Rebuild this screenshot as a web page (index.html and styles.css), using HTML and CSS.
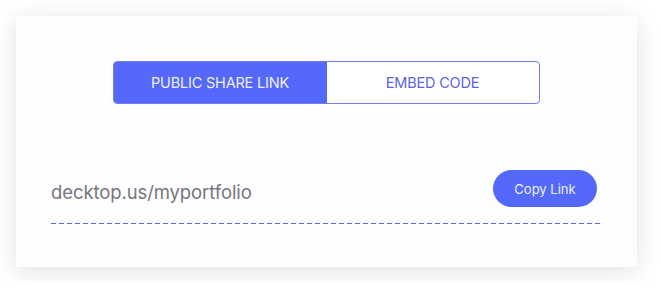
FILE: index.html
```html
<!DOCTYPE html>
<html>
<head>
<meta charset="utf-8">
<link rel="stylesheet" href="styles.css">
</head>
<body>
<div class="card">
  <div class="tabs">
    <div class="tab tab-active">PUBLIC SHARE LINK</div>
    <div class="tab">EMBED CODE</div>
  </div>
  <div class="link-row">
    <span class="url">decktop.us/myportfolio</span>
    <button class="copy">Copy Link</button>
  </div>
  <div class="dashed"></div>
</div>
</body>
</html>
```
FILE: styles.css
```css
html, body {
  margin: 0;
  padding: 0;
  background: #ffffff;
}
body {
  padding: 16px;
  font-family: "Inter", "Liberation Sans", sans-serif;
}
.card {
  width: 621px;
  height: 251px;
  box-sizing: border-box;
  background: #fdfdff;
  box-shadow: 0 4px 22px rgba(0, 0, 0, 0.12);
  padding: 45px 36px 0 35px;
}
.tabs {
  display: flex;
  width: 427px;
  height: 43px;
  margin: 0 auto;
  box-sizing: border-box;
  border: 1px solid #737cf0;
  border-radius: 4px;
  overflow: hidden;
  background: #ffffff;
}
.tab {
  flex: 1;
  display: flex;
  align-items: center;
  justify-content: center;
  font-size: 14.5px;
  color: #5a63e0;
  letter-spacing: -0.2px;
}
.tab-active {
  flex: 0 0 213px;
  background: #5468fa;
  color: #eef0ff;
}
.link-row {
  display: flex;
  align-items: center;
  justify-content: space-between;
  margin-top: 66px;
  padding-right: 4px;
  height: 37px;
}
.url {
  font-size: 18.5px;
  color: #77767c;
  letter-spacing: -0.1px;
  padding-top: 6px;
}
.copy {
  width: 104px;
  height: 37px;
  border: none;
  border-radius: 19px;
  background: #5468fa;
  color: #eef0ff;
  font-family: "Inter", "Liberation Sans", sans-serif;
  font-size: 13px;
  padding: 0;
}
.dashed {
  margin-top: 16px;
  height: 1px;
  background: repeating-linear-gradient(to right, #5c66f0 0 5px, transparent 5px 8px);
}
```
